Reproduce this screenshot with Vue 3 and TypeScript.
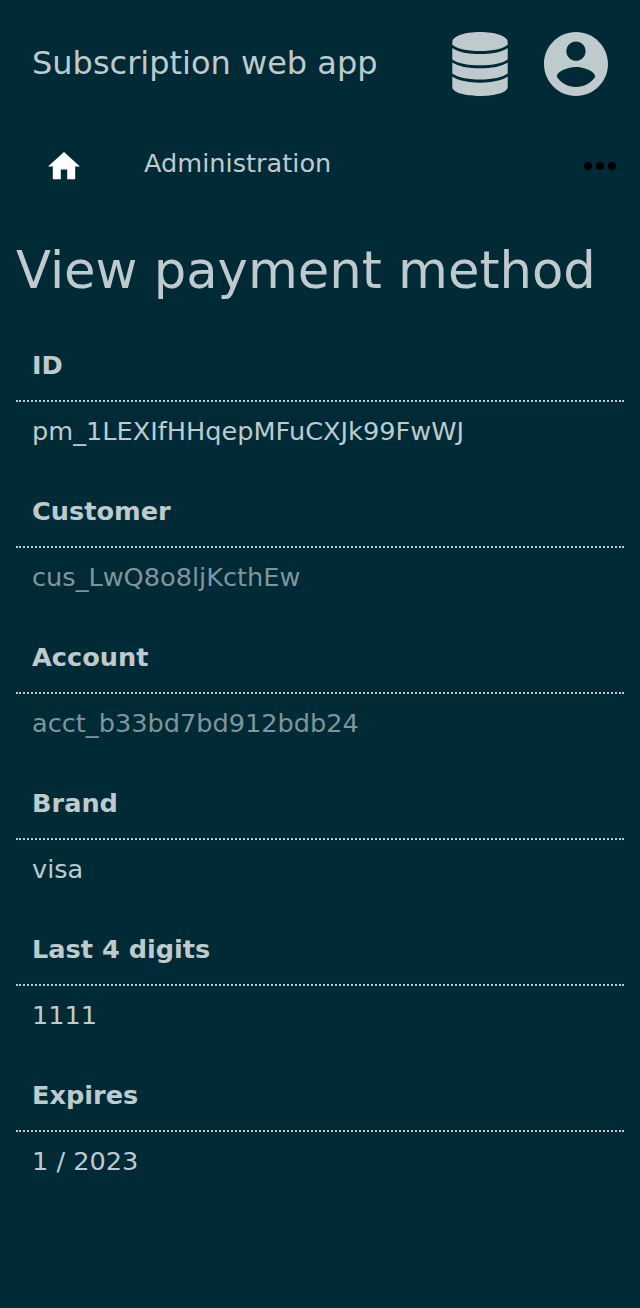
<script setup lang="ts">
interface Field { label: string; value: string; link?: boolean }
const fields: Field[] = [
  { label: 'ID', value: 'pm_1LEXIfHHqepMFuCXJk99FwWJ' },
  { label: 'Customer', value: 'cus_LwQ8o8ljKcthEw', link: true },
  { label: 'Account', value: 'acct_b33bd7bd912bdb24', link: true },
  { label: 'Brand', value: 'visa' },
  { label: 'Last 4 digits', value: '1111' },
  { label: 'Expires', value: '1 / 2023' },
]
</script>

<template>
  <div class="page">
    <header class="header">
      <span class="brand">Subscription web app</span>
      <div class="actions">
        <svg class="database" viewBox="0 0 56 64" width="56" height="64">
          <path d="M.3 10C.3 4 13 0 28 0s27.7 4 27.7 10v2.3C53 16.500 41.500 19.100 28 19.100S3 16.500 .3 12.300z" />
          <path d="M.3 15.900C6 20 16.500 22.100 28 22.100S50 20 55.700 15.900V27.400C51 31 40.500 33.200 28 33.200S5 31 .3 27.400z" />
          <path d="M.3 30.400C6 34.300 16.500 36.300 28 36.300S50 34.300 55.700 30.400V41.600C51 45.300 40.500 47.600 28 47.600S5 45.300 .3 41.600z" />
          <path d="M.3 44.600C6 48.600 16.500 50.700 28 50.700S50 48.600 55.700 44.600V55C55.700 60.500 43 64 28 64S.3 60.500 .3 55z" />
        </svg>
        <svg class="user" viewBox="2 2 20 20" width="64" height="64">
          <path d="M12 2C6.480 2 2 6.480 2 12s4.480 10 10 10 10-4.480 10-10S17.520 2 12 2zm0 3c1.660 0 3 1.340 3 3s-1.340 3-3 3-3-1.340-3-3 1.340-3 3-3zm0 14.200c-2.500 0-4.710-1.280-6-3.220.03-1.990 4-3.080 6-3.080 1.990 0 5.970 1.090 6 3.080-1.290 1.940-3.500 3.220-6 3.220z" />
        </svg>
      </div>
    </header>
    <nav class="nav">
      <svg class="home" viewBox="2 3 20 17" width="32" height="27.2"><path d="M10 20v-6h4v6h5v-8h3L12 3 2 12h3v8z" /></svg>
      <span class="crumb">Administration</span>
      <svg class="more" viewBox="0 0 32 8" width="32" height="8"><circle cx="4" cy="4" r="4" /><circle cx="16" cy="4" r="4" /><circle cx="28" cy="4" r="4" /></svg>
    </nav>
    <main>
      <h1>View payment method</h1>
      <section v-for="f in fields" :key="f.label" class="field">
        <h2>{{ f.label }}</h2>
        <p :class="{ link: f.link }">{{ f.value }}</p>
      </section>
    </main>
  </div>
</template>

<style>
body { background: #002b36; }
</style>
<style scoped>
.page { box-sizing: border-box; min-height: 1308px; background: #002b36; color: #bfcacd; font-family: "DejaVu Sans", sans-serif; font-size: 25.6px; }
.header { height: 128px; padding: 0 32px; box-sizing: border-box; display: flex; align-items: center; justify-content: space-between; }
.brand { font-size: 32px; margin-bottom: 2px; }
.actions { display: flex; gap: 36px; fill: #bfcacd; }
.nav { height: 72px; padding: 0 24px 0 48px; display: flex; align-items: center; }
.home { fill: #fff; margin-top: 4px; }
.crumb { margin: 0 0 2px 64px; }
.more { margin: 4px 0 0 auto; fill: #000; }
main { padding: 0 16px; }
h1 { margin: 0; font-size: 51.2px; font-weight: 400; line-height: 60px; padding: 40px 0 32px; white-space: nowrap; }
.field { height: 146px; }
h2 { margin: 0; height: 68px; line-height: 66px; padding: 0 16px; border-bottom: 2px dotted #bfcacd; font-size: 25.6px; }
p { margin: 0; padding: 0 16px; line-height: 58px; }
.link { color: #80959b; }
</style>
